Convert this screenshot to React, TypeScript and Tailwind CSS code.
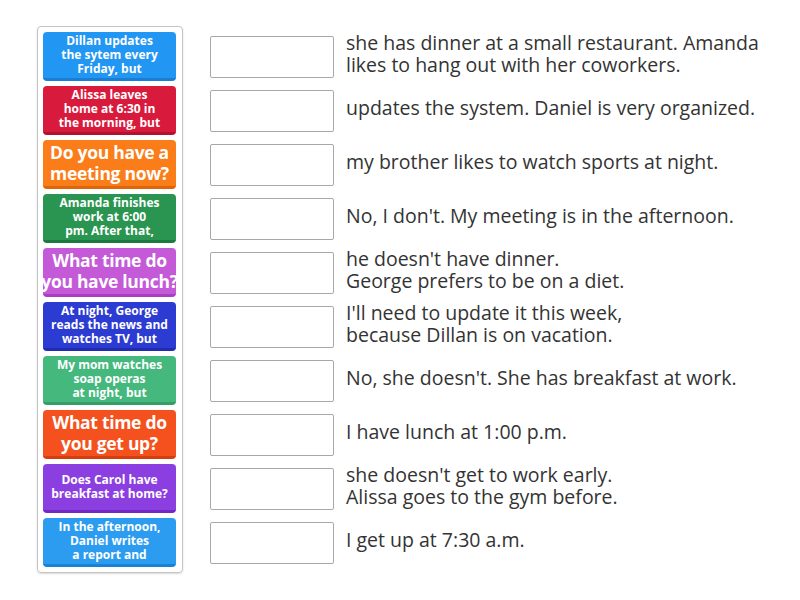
const tiles = [
    { lines: ["Dillan updates", "the sytem every", "Friday, but"], big: false, bg: "bg-[#2196f3]", edge: "border-[#1a7fd4]" },
    { lines: ["Alissa leaves", "home at 6:30 in", "the morning, but"], big: false, bg: "bg-[#d81b3c]", edge: "border-[#b3122e]" },
    { lines: ["Do you have a", "meeting now?"], big: true, bg: "bg-[#fb7d1a]", edge: "border-[#de6508]" },
    { lines: ["Amanda finishes", "work at 6:00", "pm. After that,"], big: false, bg: "bg-[#2a9550]", edge: "border-[#1d7a3e]" },
    { lines: ["What time do", "you have lunch?"], big: true, bg: "bg-[#c45ad8]", edge: "border-[#a83fc0]" },
    { lines: ["At night, George", "reads the news and", "watches TV, but"], big: false, bg: "bg-[#2c3bd1]", edge: "border-[#1f2cb0]" },
    { lines: ["My mom watches", "soap operas", "at night, but"], big: false, bg: "bg-[#45b87d]", edge: "border-[#339e68]" },
    { lines: ["What time do", "you get up?"], big: true, bg: "bg-[#f4511e]", edge: "border-[#d53e0e]" },
    { lines: ["Does Carol have", "breakfast at home?"], big: false, bg: "bg-[#8c3fe0]", edge: "border-[#7128c4]" },
    { lines: ["In the afternoon,", "Daniel writes", "a report and"], big: false, bg: "bg-[#2b9cf0]", edge: "border-[#1a82d6]" },
]

const answers = [
    ["she has dinner at a small restaurant. Amanda", "likes to hang out with her coworkers."],
    ["updates the system. Daniel is very organized."],
    ["my brother likes to watch sports at night."],
    ["No, I don't. My meeting is in the afternoon."],
    ["he doesn't have dinner.", "George prefers to be on a diet."],
    ["I'll need to update it this week,", "because Dillan is on vacation."],
    ["No, she doesn't. She has breakfast at work."],
    ["I have lunch at 1:00 p.m."],
    ["she doesn't get to work early.", "Alissa goes to the gym before."],
    ["I get up at 7:30 a.m."],
]

function Tile({ lines, big, bg, edge }: { lines: string[]; big: boolean; bg: string; edge: string }) {
    return (
        <div
            className={`h-[49px] w-[133px] rounded-[4px] border-b-[3px] ${bg} ${edge} flex flex-col items-center justify-center text-center text-white font-bold whitespace-nowrap`}
        >
            {lines.map((l) => (
                <div
                    key={l}
                    className={big ? "text-[17.5px] leading-[21px] tracking-[-0.3px]" : "text-[12px] leading-[14px]"}
                >
                    {l}
                </div>
            ))}
        </div>
    )
}

export default function App() {
    return (
        <div className="w-[800px] h-[600px] bg-white font-['Open_Sans',sans-serif] text-[#333]">
            <div className="flex pt-[26px] pl-[37px]">
                <div className="w-[146px] border border-[#c4c4c4] rounded-[4px] p-[5px] flex flex-col gap-[5px] shadow-[0_1px_2px_rgba(0,0,0,0.15)]">
                    {tiles.map((t) => (
                        <Tile key={t.lines[0] + t.lines[1]} {...t} />
                    ))}
                </div>
                <div className="ml-[27px] pt-[6px] flex flex-col gap-[5px]">
                    {answers.map((lines, i) => (
                        <div key={i} className="h-[49px] flex items-center gap-[12px]">
                            <div className="w-[124px] h-[42px] border border-[#a8a8a8] rounded-[2px] bg-white shrink-0" />
                            <div className="text-[19.5px] leading-[22px] whitespace-nowrap mb-[5px]">
                                {lines.map((l) => (
                                    <div key={l}>{l}</div>
                                ))}
                            </div>
                        </div>
                    ))}
                </div>
            </div>
        </div>
    )
}
